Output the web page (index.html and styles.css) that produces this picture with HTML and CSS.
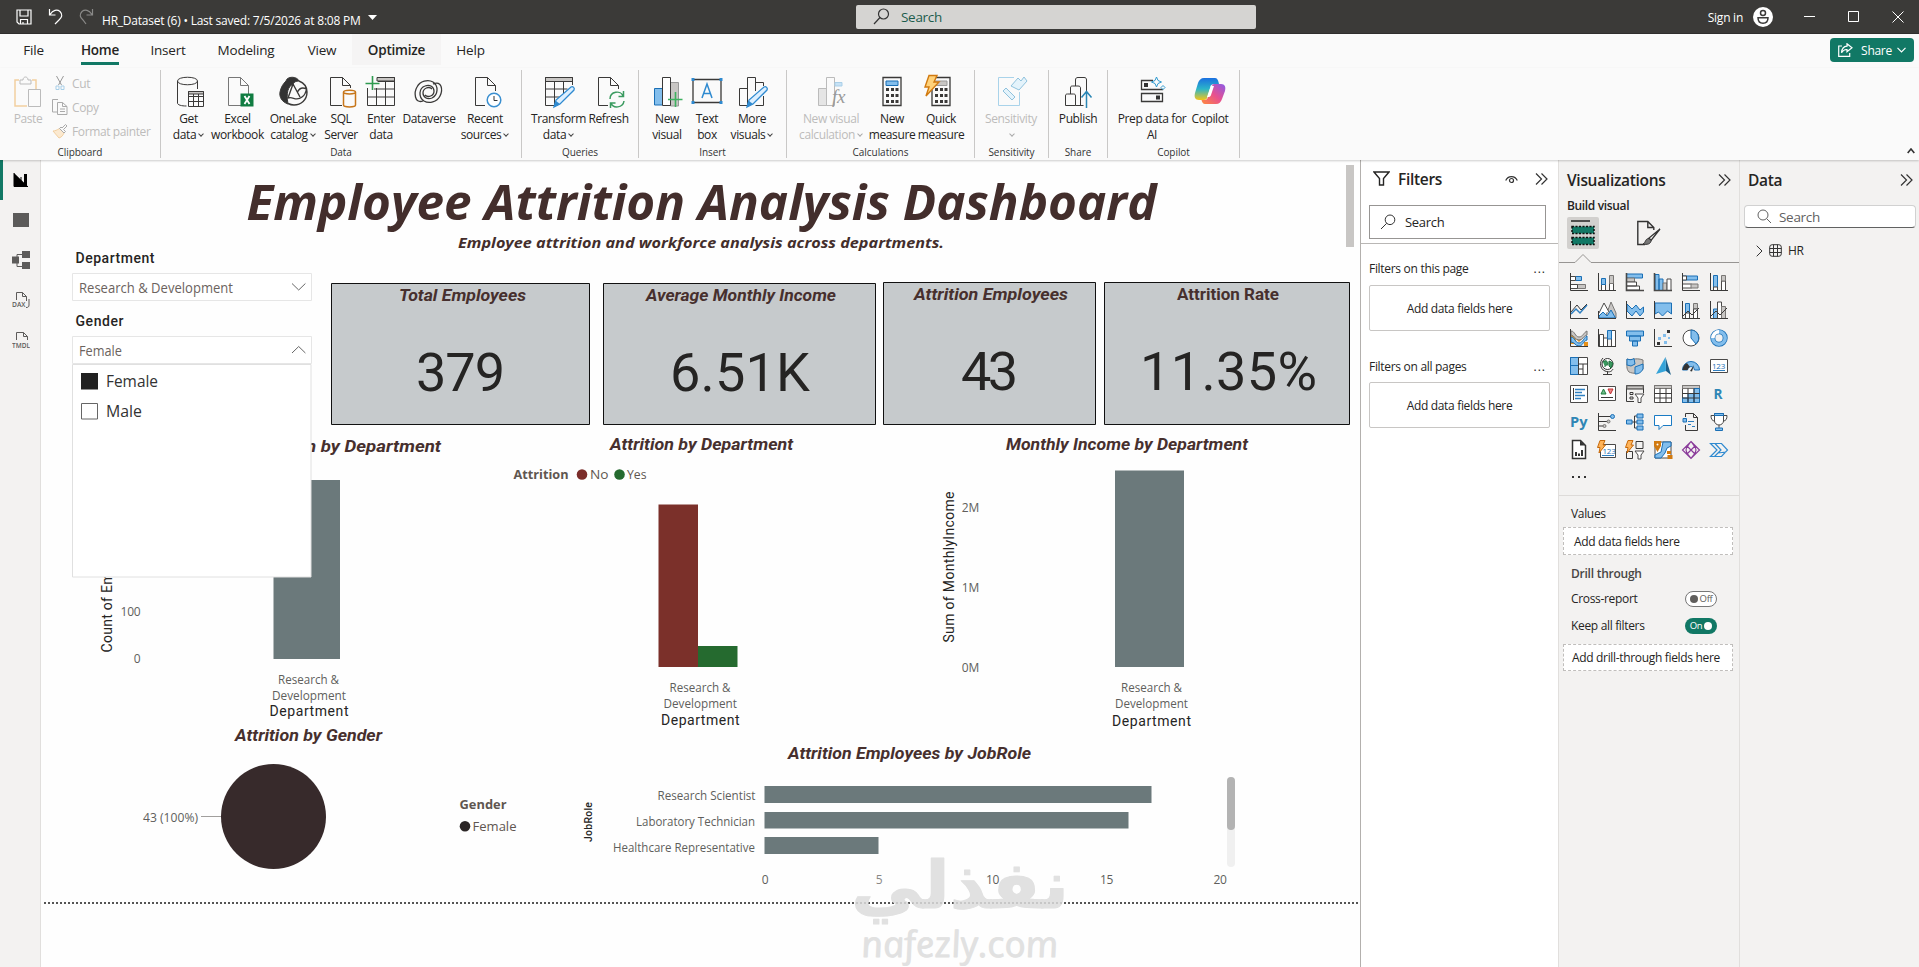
FILE: index.html
```html
<!DOCTYPE html>
<html lang="en">
<head>
<meta charset="utf-8">
<title>HR_Dataset (6)</title>
<link rel="stylesheet" href="styles.css">
</head>
<body>
<div class="app">
  <header class="titlebar">
    <div class="quick">
      <svg class="ic-save" width="16" height="16" viewBox="0 0 16 16"><path d="M1 1h14v14H3l-2-2zM4 1v6h8V1M4.500 15v-4.500h7V15M7 15v-2"/></svg>
      <svg class="ic-undo" width="16" height="17" viewBox="0 0 16 17"><path d="M1.500 1v6h6M2 6.500C5 2 9 1 12 3.500c3 3 2 6-1 8.500l-4 4"/></svg>
      <svg class="ic-redo" width="16" height="17" viewBox="0 0 16 17"><path d="M14.500 1v6h-6M14 6.500C11 2 7 1 4 3.500c-3 3-2 6 1 8.500l3 4"/></svg>
      <span class="doc">HR_Dataset (6) • Last saved: 7/5/2026 at 8:08 PM</span>
      <svg class="ic-drop" width="9" height="5" viewBox="0 0 9 5"><path d="M0 0h9L4.500 5z"/></svg>
    </div>
    <div class="topsearch">
      <svg width="17" height="17" viewBox="0 0 17 17"><circle cx="10.500" cy="6" r="5"/><path d="M7 9.500L1 16"/></svg>
      <span>Search</span>
    </div>
    <div class="account">
      <span>Sign in</span>
      <svg class="avatar" width="20" height="20" viewBox="0 0 20 20"><circle cx="10" cy="10" r="10" fill="#fff"/><circle cx="10" cy="6" r="2.500" fill="none" stroke="#3b3a39" stroke-width="1.500"/><path d="M5 10.700h10c0 4-2 5.500-5 5.500s-5-1.500-5-5.500z" fill="none" stroke="#3b3a39" stroke-width="1.500"/></svg>
      <svg class="win" width="11" height="11" viewBox="0 0 11 11"><path d="M0 5.500h11"/></svg>
      <svg class="win" width="11" height="11" viewBox="0 0 11 11"><path d="M.5 .5h10v10H.5z"/></svg>
      <svg class="win last" width="12" height="12" viewBox="0 0 12 12"><path d="M.5 .5l11 11M11.500 .5l-11 11"/></svg>
    </div>
  </header>

  <nav class="tabs">
    <span class="tab t-file">File</span><span class="tab t-home active">Home</span><span class="tab t-insert">Insert</span><span class="tab t-model">Modeling</span><span class="tab t-view">View</span><span class="tab t-opt">Optimize</span><span class="tab t-help">Help</span>
    <button class="share"><svg width="15" height="14" viewBox="0 0 15 14"><path d="M4 3H.7v10.300h11V10M9 .8l5 4-5 4V6.500C6.500 6.300 4.800 7.500 3.500 9.700 3.800 6 5.500 3.500 9 3.200z"/></svg><span>Share</span><svg width="9" height="6" viewBox="0 0 9 6"><path d="M.5 .8l4 4 4-4"/></svg></button>
  </nav>

  <section class="ribbon">
    <div class="group g-clip">
      <div class="items">
        <div class="btn dis w-paste"><svg width="28" height="32" viewBox="0 0 28 32"><path d="M5 4H1v26h12M18 4h4v10" stroke="#f2cfa0" stroke-width="1.500"/><path d="M6 8V4h3c0-4 5-4 5 0h3v4z" stroke="#bbb"/><path d="M14.500 13.500h12v17h-12z" stroke="#bbb"/></svg><span>Paste</span></div>
        <div class="clips">
          <div class="clip"><svg width="16" height="16" viewBox="0 0 16 16"><path d="M4.500 1l5 9M11.500 1l-5 9" stroke="#999"/><path d="M4 11h3v3.500H4zM9 11h3v3.500H9z" stroke="#a9cfe8"/></svg><span>Cut</span></div>
          <div class="clip"><svg width="16" height="16" viewBox="0 0 16 16"><path d="M5 13H.5V.5H6M5.500 3.500h5l4.500 4v8H5.500zM10.500 3.500v4H15M8 10h5M8 12.500h5" stroke="#aaa"/></svg><span>Copy</span></div>
          <div class="clip"><svg width="16" height="16" viewBox="0 0 16 16"><path d="M1 8l6 7c3-1 4-3 5-5L7.500 5.500C5 7 3 8 1 8z" stroke="#f2cfa0" fill="#fbe9d0"/><path d="M7.500 5.500l4.500 4.500 1.500-1.500-2-2L15 3l-1.500-1.500L10 5 9 4z" stroke="#aaa"/></svg><span>Format painter</span></div>
        </div>
      </div>
      <div class="cap">Clipboard</div>
    </div>
    <div class="group g-data">
      <div class="items">
        <div class="btn w49"><svg width="32" height="32" viewBox="0 0 32 32"><path d="M4.500 5v22c0 2 4 3 9 3M24.500 5v8M4.500 5c0-5 20-5 20 0s-20 5-20 0z"/><path d="M15.500 15.500h15v15h-15zM15.500 20.500h15M15.500 25.500h15M20.500 18v12.500M25.500 18v12.500"/><path d="M15.500 15.500h15v2.500h-15z" fill="#c8c6c4"/></svg><span>Get<br>data<i></i></span></div>
        <div class="btn w49"><svg width="32" height="32" viewBox="0 0 32 32"><path d="M19 29.500H6.500v-28h12l8 8V18M18.500 1.500v8h8" stroke="#777"/><path d="M18.500 17.500h13v13h-13z" fill="#107c41" stroke="none"/><path d="M22.500 20l5 8M27.500 20l-5 8" stroke="#fff" stroke-width="1.800"/></svg><span>Excel<br>workbook</span></div>
        <div class="btn w62"><svg width="32" height="32" viewBox="0 0 32 32"><path d="M9 5c1-5 11-5 13 0-3 0-5 1-6 3-5 3-7 8-5 20-6-2-9-7-8-12C4 11 6 8 9 5z" fill="#333"/><path d="M22 5c5 2 8 6 8 11 0 8-6 13-13 13-2 0-4-.5-6-1.500M16 8l7 13M11 22c5-2 8 4 14-1 3-2 4-5 4.500-8-4-2-7-1-9 3M11 22l5-14" stroke-width="1.400"/></svg><span>OneLake<br>catalog<i></i></span></div>
        <div class="btn w34"><svg width="32" height="32" viewBox="0 0 32 32"><path d="M17 29.500H5.500v-28h12l8 8V12M17.500 1.500v8h8"/><path d="M18.500 16v13c0 2.500 12 2.500 12 0V16c0-2.500-12-2.500-12 0s12 2.500 12 0" stroke="#c7761a" stroke-width="1.500"/></svg><span>SQL<br>Server</span></div>
        <div class="btn w46"><svg width="32" height="32" viewBox="0 0 32 32"><path d="M12 1.500h17.500V5H12z" fill="#c8c6c4"/><path d="M2.500 12v17.500h27v-28H12M2.500 21h27M13 5.500h16.500M9 13h20.500M11.500 12v17.500M20.500 5v24.500"/><path d="M7.500 0v14M.5 7.500h14" stroke="#2e9a4f" stroke-width="1.600"/></svg><span>Enter<br>data</span></div>
        <div class="btn w50"><svg width="32" height="32" viewBox="0 0 32 32"><path d="M10 25C1 28 1 16 4 11c3-6 11-8 16-5 6 4 5 13-1 16-5 2-9-1-9-5 0-5 6-7 9-4M20 8c9-4 10 6 7 12-3 6-11 8-16 5-6-4-5-13 1-15 5-2 9 1 9 5 0 5-6 7-9 4" stroke-width="1.300"/></svg><span>Dataverse</span></div>
        <div class="btn w62"><svg width="32" height="32" viewBox="0 0 32 32"><path d="M16 29.500H6.500v-28h12l8 8V15M18.500 1.500v8h8"/><circle cx="25" cy="24" r="6.800" stroke="#3a8fd0" stroke-width="1.500" fill="#fff"/><path d="M25 20v4.500h3.500" stroke="#333"/></svg><span>Recent<br>sources<i></i></span></div>
      </div>
      <div class="cap">Data</div>
    </div>
    <div class="group g-quer">
      <div class="items">
        <div class="btn w53"><svg width="32" height="32" viewBox="0 0 32 32"><path d="M2.500 1.500h27v4h-27z" fill="#c8c6c4"/><path d="M14 29.500H2.500v-28h27V9M2.500 13h22M2.500 21h15M11.500 5v24.500M20.500 5v12"/><path d="M11 31l2-7 15-13c2-1 4 1 3 3L17 28z" stroke="#2f8ad0" fill="#dcefff" stroke-width="1.300"/><path d="M11 31l2-6 4 3z" fill="#2f8ad0" stroke="none"/></svg><span>Transform<br>data<i></i></span></div>
        <div class="btn w47"><svg width="32" height="32" viewBox="0 0 32 32"><path d="M15 29.500H5.500v-28h12l8 8V13M17.500 1.500v8h8"/><path d="M17 23c0-8 11-9 13-3M30.500 15v5.500h-5M31 25c-1 7-11 8-13 2M17.500 32v-5h5" stroke="#3a9a5f" stroke-width="1.500"/></svg><span>Refresh</span></div>
      </div>
      <div class="cap">Queries</div>
    </div>
    <div class="group g-ins">
      <div class="items">
        <div class="btn w44"><svg width="32" height="32" viewBox="0 0 32 32"><path d="M19.500 6.500h8V30h-8z" fill="#c8c6c4" stroke="#999"/><path d="M3.500 12.500h8V29h-8z" fill="#83beec" stroke="#1a6fb5"/><path d="M11.500 1.500h8v28h-8z" fill="#fff"/><path d="M24.500 16v15M17 23.500h14.500" stroke="#3db15f" stroke-width="1.600"/></svg><span>New<br>visual</span></div>
        <div class="btn w36"><svg width="32" height="32" viewBox="0 0 32 32"><path d="M2 3.500h28v23H2z" stroke-width="1.300"/><path d="M.5 2h3v3h-3zM28.500 2h3v3h-3zM.5 25h3v3h-3zM28.500 25h3v3h-3z" fill="#2f8ad0" stroke="none"/><path d="M11 22l5-14 5 14M12.700 17.500h6.600" stroke="#2f8ad0" stroke-width="1.500"/></svg><span>Text<br>box</span></div>
        <div class="btn w54"><svg width="32" height="32" viewBox="0 0 32 32"><path d="M3.500 12.500h8v17h-8zM11.500 29.500v-28h8V15M19.500 6.500h8V10M19.500 29.500h8V20"/><path d="M11 31l2-7 15-13c2-1 4 1 3 3L17 28z" stroke="#2f8ad0" fill="#dcefff" stroke-width="1.300"/><path d="M11 31l2-6 4 3z" fill="#2f8ad0" stroke="none"/></svg><span>More<br>visuals<i></i></span></div>
      </div>
      <div class="cap">Insert</div>
    </div>
    <div class="group g-calc">
      <div class="items">
        <div class="btn dis w70"><svg width="32" height="32" viewBox="0 0 32 32"><path d="M3.500 12.500h8v17h-8z" fill="#e5e5e5" stroke="#bbb"/><path d="M11.500 1.500h8v28h-8z" stroke="#bbb"/><path d="M20 6.500h7V10h-7z" fill="#c7e2f5" stroke="#a9cfe8"/><text x="17" y="27" class="fx">fx</text></svg><span>New visual<br>calculation<i></i></span></div>
        <div class="btn w52"><svg width="32" height="32" viewBox="0 0 32 32"><path d="M7 1.500h18v28H7z" stroke-width="1.300"/><path d="M10 5h12v4.500H10z" fill="#83beec" stroke="#1a6fb5"/><path d="M11.500 12v16M16.500 12v16M21 12v16" stroke-width="3" stroke-dasharray="3 3"/></svg><span>New<br>measure</span></div>
        <div class="btn w46"><svg width="32" height="32" viewBox="0 0 32 32"><path d="M7 1.500h18v28H7z" stroke-width="1.300"/><path d="M10 5h12v4.500H10z" fill="#c8c6c4" stroke="#999"/><path d="M11.500 12v16M16.500 12v16M21 12v16" stroke-width="3" stroke-dasharray="3 3"/><path d="M4 -.5h8L9 6h5L1 20l3-9H0z" fill="#ffd27a" stroke="#d17a10" stroke-width="1.400"/></svg><span>Quick<br>measure</span></div>
      </div>
      <div class="cap">Calculations</div>
    </div>
    <div class="group g-sens">
      <div class="items">
        <div class="btn dis w52"><svg width="32" height="32" viewBox="0 0 32 32"><path d="M19 1.500H3.500v28h21V16" stroke="#a9d3ea"/><path d="M8 15l3-3 9 9-3 3zM16 10l7-8 3 3 3-4 3 4-8 9z" stroke="#8fc2dd" fill="#e4f3fb"/></svg><span>Sensitivity<br><i></i></span></div>
      </div>
      <div class="cap">Sensitivity</div>
    </div>
    <div class="group g-share">
      <div class="items">
        <div class="btn w52"><svg width="32" height="32" viewBox="0 0 32 32"><path d="M13.500 10V4c0-2 1-2.500 2.500-2.500h6c2 0 2.500 1 2.500 2.500v12M8.500 18v-6c0-1.500.5-2 2-2H16c2 0 2.500 1 2.500 2v17M3.500 29.500V20c0-1.500.5-2 2-2h6c1.500 0 2 .5 2 2v9.500zM13.500 29.500h8"/><path d="M24.500 32V16M19.500 21.500l5-6 5 6" stroke="#2a86b5" stroke-width="1.500"/></svg><span>Publish</span></div>
      </div>
      <div class="cap">Share</div>
    </div>
    <div class="group g-cop">
      <div class="items">
        <div class="btn w72"><svg width="32" height="32" viewBox="0 0 32 32"><path d="M17 4.500H5.500v9h21V13M5.500 17.500h21v8h-21z" stroke-width="1.300"/><path d="M8 7h4v4H8zM20 19.500h4v4h-4z" fill="#333" stroke="none"/><path d="M20.500 1l1.500 3.500L25.500 6 22 7.500 20.500 11 19 7.500 15.500 6 19 4.500zM27 9.500l2 2-2 2-2-2z" stroke="#2f9ad0" fill="#fafafa"/></svg><span>Prep data for<br>AI</span></div>
        <div class="btn w44"><svg width="32" height="32" viewBox="0 0 32 32">
          <defs><linearGradient id="ca" x1="0" y1="0" x2="0" y2="1"><stop offset="0" stop-color="#1b6fe0"/><stop offset=".5" stop-color="#2cb6c8"/><stop offset="1" stop-color="#f5c518"/></linearGradient><linearGradient id="cb" x1="1" y1="0" x2="0" y2="1"><stop offset="0" stop-color="#8a5be8"/><stop offset=".5" stop-color="#e8508f"/><stop offset="1" stop-color="#ff8a3c"/></linearGradient></defs>
          <path d="M10 2h11c2 0 3 2 3.500 4l.5 2h-5c-2 0-3 1-3.500 3l-3 10c-.5 2-1.500 3-3.500 3H5c-4 0-5-3-4-7L4 7c1-3 3-5 6-5z" fill="url(#ca)" stroke="none"/><path d="M22 28H11c-2 0-3-2-3.500-4h3c2 0 3-1 3.500-3l3-10c.5-2 1.500-3 3.500-3H27c4 0 5 3 4 7l-3 8c-1 3-3 5-6 5z" fill="url(#cb)" stroke="none"/><path d="M17 9l-4 12h1.500c1 0 2-.5 2.500-2l3-9h-1z" fill="#fff" stroke="none"/></svg><span>Copilot</span></div>
      </div>
      <div class="cap">Copilot</div>
    </div>
    <svg class="collapse" width="8" height="6" viewBox="0 0 8 6"><path d="M.7 5l3.300-4 3.300 4"/></svg>
  </section>

  <main class="work">
    <aside class="rail">
      <div class="railbtn on"><svg width="16" height="16" viewBox="0 0 16 16"><path d="M1 1v13h13V2h-3v10L1 2z" fill="#000"/><path d="M1 1v13.500h14M8 5v8" stroke="#000"/></svg></div>
      <div class="railbtn"><svg width="16" height="16" viewBox="0 0 16 16"><path d="M0 1h16v14H0z" fill="#5c5b5a"/></svg></div>
      <div class="railbtn"><svg width="18" height="18" viewBox="0 0 18 18"><path d="M10 0h8v7h-8zM10 11h8v7h-8zM0 5.500h7v7H0z" fill="#5c5b5a"/><path d="M5 6V3.500h6M5 12v3.500h6" stroke="#5c5b5a" fill="none"/></svg></div>
      <div class="railbtn"><svg width="18" height="18" viewBox="0 0 18 18"><path d="M4.500 9V1.500h6l4 4V10M10.500 1.500v4h4M17 8v6c0 2-1 2.500-3 2.500" stroke="#5c5b5a" fill="none"/><text x="0" y="16" class="railtxt" textLength="13.500" lengthAdjust="spacingAndGlyphs">DAX</text></svg></div>
      <div class="railbtn"><svg width="18" height="18" viewBox="0 0 18 18"><path d="M4.500 9V1.500h7l4 4V9M11.500 1.500v4h4" stroke="#5c5b5a" fill="none"/><text x="0" y="16.500" class="railtxt" textLength="18" lengthAdjust="spacingAndGlyphs">TMDL</text></svg></div>
    </aside>

    <section class="canvas">
      <svg class="report" width="1319" height="807" viewBox="41 160 1319 807">
        <text class="h1" x="246.500" y="219.500" textLength="910" lengthAdjust="spacingAndGlyphs">Employee Attrition Analysis Dashboard</text>
        <text class="h2" x="458" y="248" textLength="486" lengthAdjust="spacingAndGlyphs">Employee attrition and workforce analysis across departments.</text>

        <g class="card">
          <path d="M331.500 283.500h258v141h-258zM603.500 283.500h272v141h-272zM883.500 282.500h212v142h-212zM1104.500 282.500h245v142h-245z"/>
          <text class="ct it" x="399" y="301" textLength="127" lengthAdjust="spacingAndGlyphs">Total Employees</text>
          <text class="ct it" x="646" y="301" textLength="190" lengthAdjust="spacingAndGlyphs">Average Monthly Income</text>
          <text class="ct it" x="914" y="300" textLength="154" lengthAdjust="spacingAndGlyphs">Attrition Employees</text>
          <text class="ct" x="1177" y="300" textLength="102" lengthAdjust="spacingAndGlyphs">Attrition Rate</text>
          <text class="cv" x="416" y="390.500" textLength="89">379</text>
          <text class="cv" x="670" y="390.500" textLength="140">6.51K</text>
          <text class="cv" x="961" y="389.500" textLength="57">43</text>
          <text class="cv" x="1140" y="389.500" textLength="177">11.35%</text>
        </g>

        <g class="chart">
          <text class="ct it" x="306" y="452" textLength="135" lengthAdjust="spacingAndGlyphs">n by Department</text>
          <path class="bar" d="M273.500 480H340v179h-66.500z"/>
          <text class="ax" transform="translate(112 652.500) rotate(-90)" textLength="80">Count of Em</text>
          <text class="tk end" x="140.500" y="616">100</text>
          <text class="tk end" x="140.500" y="663">0</text>
          <text class="tk" x="278" y="684" textLength="61" lengthAdjust="spacingAndGlyphs">Research &amp;</text>
          <text class="tk" x="272" y="700" textLength="74" lengthAdjust="spacingAndGlyphs">Development</text>
          <text class="ax" x="269.500" y="716" textLength="79">Department</text>
        </g>

        <g class="chart">
          <text class="ct it" x="610" y="450" textLength="183" lengthAdjust="spacingAndGlyphs">Attrition by Department</text>
          <text class="lg b" x="513.500" y="479" textLength="55" lengthAdjust="spacingAndGlyphs">Attrition</text>
          <circle cx="582" cy="474.500" r="5.300" fill="#7b2d2a"/><text class="lg" x="590" y="479" textLength="18.500" lengthAdjust="spacingAndGlyphs">No</text>
          <circle cx="619.500" cy="474.500" r="5.300" fill="#256a2f"/><text class="lg" x="627" y="479" textLength="19.500" lengthAdjust="spacingAndGlyphs">Yes</text>
          <path d="M658.500 504.500H698V667h-39.500z" fill="#7b302a"/>
          <path d="M698 646h39.500v21H698z" fill="#256a2f"/>
          <text class="tk" x="669.500" y="692" textLength="61" lengthAdjust="spacingAndGlyphs">Research &amp;</text>
          <text class="tk" x="663.500" y="708" textLength="73.500" lengthAdjust="spacingAndGlyphs">Development</text>
          <text class="ax" x="661" y="724.500" textLength="78.500">Department</text>
        </g>

        <g class="chart">
          <text class="ct it" x="1006" y="450" textLength="242" lengthAdjust="spacingAndGlyphs">Monthly Income by Department</text>
          <text class="ax" transform="translate(953.500 642.500) rotate(-90)" textLength="151">Sum of MonthlyIncome</text>
          <text class="tk end" x="979" y="512">2M</text>
          <text class="tk end" x="979" y="592">1M</text>
          <text class="tk end" x="979" y="672">0M</text>
          <path class="bar" d="M1115 470.500h69V667h-69z"/>
          <text class="tk" x="1121" y="692" textLength="61" lengthAdjust="spacingAndGlyphs">Research &amp;</text>
          <text class="tk" x="1115" y="708" textLength="73" lengthAdjust="spacingAndGlyphs">Development</text>
          <text class="ax" x="1112" y="725.500" textLength="79">Department</text>
        </g>

        <g class="chart">
          <text class="ct it" x="235" y="741" textLength="147" lengthAdjust="spacingAndGlyphs">Attrition by Gender</text>
          <circle cx="273.500" cy="816.500" r="52.500" fill="#372a2b"/>
          <path d="M201 816.500h20" stroke="#a19f9d"/>
          <text class="tk" x="143" y="822" textLength="55" lengthAdjust="spacingAndGlyphs">43 (100%)</text>
          <text class="lg b" x="459.500" y="809" textLength="47" lengthAdjust="spacingAndGlyphs">Gender</text>
          <circle cx="465" cy="826.300" r="5.300" fill="#2b2626"/>
          <text class="lg" x="472.500" y="831" textLength="44" lengthAdjust="spacingAndGlyphs">Female</text>
        </g>

        <g class="chart">
          <text class="ct it" x="788" y="759" textLength="243" lengthAdjust="spacingAndGlyphs">Attrition Employees by JobRole</text>
          <text class="ax sm" transform="translate(592 842) rotate(-90)" textLength="40">JobRole</text>
          <text class="tk" x="657.500" y="800" textLength="98" lengthAdjust="spacingAndGlyphs">Research Scientist</text>
          <text class="tk" x="636" y="826" textLength="119" lengthAdjust="spacingAndGlyphs">Laboratory Technician</text>
          <text class="tk" x="613" y="852" textLength="142" lengthAdjust="spacingAndGlyphs">Healthcare Representative</text>
          <path class="bar" d="M764.500 786h387v17h-387zM764.500 812h364v16.500h-364zM764.500 837h114v17h-114z"/>
          <g class="mid"><text class="tk" x="765" y="884">0</text><text class="tk faint" x="879" y="884">5</text><text class="tk" x="992.500" y="884">10</text><text class="tk" x="1106.500" y="884">15</text><text class="tk" x="1220" y="884">20</text></g>
          <rect x="1227" y="777" width="8" height="90" rx="4" fill="#f0f0f0"/>
          <rect x="1227" y="777" width="8" height="53" rx="4" fill="#b3b3b3"/>
        </g>

        <g class="slicer">
          <text class="sl" x="75.500" y="263" textLength="79">Department</text>
          <path d="M72.500 273.500h239v27h-239z"/>
          <text class="sv" x="79" y="293" textLength="154" lengthAdjust="spacingAndGlyphs">Research &amp; Development</text>
          <path class="chev" d="M292 283.500l6.700 6.500 6.700-6.500"/>
          <text class="sl" x="75.500" y="326" textLength="48">Gender</text>
          <path d="M72.500 336.500h239v27h-239z"/>
          <text class="sv" x="79" y="356" textLength="43" lengthAdjust="spacingAndGlyphs">Female</text>
          <path class="chev" d="M292 353l6.700-6.500 6.700 6.500"/>
          <path class="pop" d="M72.500 364.500h238.500v212.500h-238.500z"/>
          <path d="M81 373h17v16.500H81z" class="checked"/>
          <text class="so" x="106" y="387" textLength="52" lengthAdjust="spacingAndGlyphs">Female</text>
          <path d="M81.500 403.500h16v15.500h-16z" class="box"/>
          <text class="so" x="106" y="417" textLength="36" lengthAdjust="spacingAndGlyphs">Male</text>
        </g>

        <path d="M44 903h1316" stroke="#555" stroke-width="2" stroke-dasharray="2 2"/>

        <g class="wm">
          <text class="wm-ar" transform="translate(960 908) scale(1.080 1)" text-anchor="middle">نفذلي</text>
          <text class="wm-en" transform="translate(863 957) skewX(10)" textLength="197" lengthAdjust="spacingAndGlyphs">nafezly.com</text>
        </g>
        <rect x="1346" y="165" width="8" height="82" fill="#c8c6c4"/>
      </svg>
    </section>

    <aside class="filters">
      <div class="fhead">
        <svg width="17" height="16" viewBox="0 0 17 16"><path d="M1 1h15l-5.500 6.500V14h-4V7.500z" fill="none" stroke="#252423" stroke-width="1.400"/></svg>
        <h2>Filters</h2>
        <svg class="eye" width="13" height="9" viewBox="0 0 13 9"><path d="M.7 5.500C3 .2 10 .2 12.300 5.500" fill="none" stroke="#333" stroke-width="1.200"/><circle cx="6.500" cy="5.500" r="2" fill="none" stroke="#333" stroke-width="1.200"/></svg>
        <svg class="dbl" width="13" height="12" viewBox="0 0 13 12"><path d="M1 .5L6.500 6 1 11.500M6.500 .5L12 6l-5.500 5.500"/></svg>
      </div>
      <div class="fsearch"><svg width="16" height="16" viewBox="0 0 16 16"><circle cx="10" cy="5.800" r="4.800"/><path d="M6.700 9.300L1 15"/></svg><span>Search</span></div>
      <div class="fsec"><span>Filters on this page</span><b>...</b></div>
      <div class="fbox">Add data fields here</div>
      <div class="fsec second"><span>Filters on all pages</span><b>...</b></div>
      <div class="fbox">Add data fields here</div>
    </aside>

    <aside class="viz">
      <div class="vhead"><h2>Visualizations</h2><svg class="dbl" width="13" height="12" viewBox="0 0 13 12"><path d="M1 .5L6.500 6 1 11.500M6.500 .5L12 6l-5.500 5.500"/></svg></div>
      <h3>Build visual</h3>
      <div class="modes">
        <div class="mode on"><svg width="24" height="26" viewBox="0 0 24 26"><path d="M0 1h19" stroke="#252423" stroke-width="1.500"/><path d="M1 6.500h22v7H1zM1 17.500h22v7H1z" fill="#117865" stroke="#111" stroke-width="1.500" stroke-dasharray="2 1.500"/></svg></div>
        <div class="mode"><svg width="24" height="26" viewBox="0 0 24 26"><path d="M8 24.500H.8V1.500h10l6 6V10M10.800 1.500v6h6" fill="none" stroke="#333" stroke-width="1.400"/><path d="M23 9L12 18l2 2.500z" fill="none" stroke="#333" stroke-width="1.300"/><path d="M12 18.500c-4 0-3 4-6 5.500 4 1 8 0 8-3.500z" fill="#777" stroke="#333"/></svg></div>
      </div>
      <svg class="notch" width="180" height="9" viewBox="0 0 180 9"><path d="M0 8.500h16l8-8 8 8h148"/></svg>
      <div class="vgrid">
        <svg viewBox="0 0 18 18"><path class="b" d="M5.500 3.500h6v4h-6z"/><path class="g" d="M6.500 11.500h9v4h-9z"/><path class="w" d="M.5 3.500h5v4h-5zM.5 11.500h7v4h-7z"/><path class="k" d="M.5 0v17.500H18"/></svg>
        <svg viewBox="0 0 18 18"><path class="w" d="M3.500 11.500h4v6h-4zM11.500 9.500h4v8h-4z"/><path class="b" d="M3.500 5.500h4v6h-4z"/><path class="g" d="M11.500 2.500h4v8h-4z"/><path class="k" d="M.5 0v17.500H18"/></svg>
        <svg viewBox="0 0 18 18"><path class="b" d="M.5 1h16v4H.5z"/><path class="g" d="M.5 5h8v4h-8z"/><path class="w" d="M.5 9h10v4H.5zM.5 13h13v4H.5z"/><path class="k2" d="M.5 0v17.500H18"/></svg>
        <svg viewBox="0 0 18 18"><path class="b" d="M1 1.500h4v16H1zM5 6h4v11.500H5z"/><path class="g" d="M9 10h4v7.500H9z"/><path class="w" d="M13 6h4v11.500h-4z"/><path class="k2" d="M.5 0v17.500H18"/></svg>
        <svg viewBox="0 0 18 18"><path class="b" d="M.5 3h15v4H.5z"/><path class="w" d="M.5 3h4v4h-4zM.5 11h9v4h-9z"/><path class="g" d="M9 11h7v4H9z"/><path class="k" d="M.5 0v17.500H18"/></svg>
        <svg viewBox="0 0 18 18"><path class="b" d="M3.500 2.500h4v12h-4z"/><path class="w" d="M3.500 14h4v3.500h-4zM11.500 8h4v9.500h-4z"/><path class="g" d="M11.500 2.500h4V8h-4z"/><path class="k" d="M.5 0v17.500H18"/></svg>

        <svg viewBox="0 0 18 18"><path class="bl" d="M1 13l5-5 4 4 7-8" stroke-width="1.500"/><path class="k" d="M1 11l6-7 4 5 6-6M.5 0v17.500H18"/></svg>
        <svg viewBox="0 0 18 18"><path class="g" d="M7 17L13 1l5 11v5z"/><path class="w" d="M1 12l5-10 5 9"/><path class="b" d="M1 17v-2l4-4 4 4 4-6 4.500 8z"/><path class="k" d="M.5 10v7.500H18"/></svg>
        <svg viewBox="0 0 18 18"><path class="b" d="M1 3l5 5 4-4 4 5 3.500-3v5L14 15l-4-5-4 5-5-5z"/><path class="k" d="M.5 0v17.500H18"/></svg>
        <svg viewBox="0 0 18 18"><path class="b" d="M1 2h16.500v11l-4-3-5 5-4-4-3.500 2z"/><path class="k" d="M.5 0v17.500H18"/></svg>
        <svg viewBox="0 0 18 18"><path class="b" d="M3.500 2.500h4v10h-4z"/><path class="g" d="M11.500 2.500h4V8h-4z"/><path class="w" d="M3.500 12h4v5.500h-4zM11.500 8h4v9.500h-4z"/><path class="k" d="M1 15l5-5 4 4 7-7M.5 0v17.500H18"/></svg>
        <svg viewBox="0 0 18 18"><path class="b" d="M3.500 8h4v9.500h-4z"/><path class="w" d="M7.500 1h4v16.500h-4z"/><path class="g" d="M11.500 5.500h4v12h-4z"/><path class="k" d="M1 15l5-5 4 4 7-7M.5 0v17.500H18"/></svg>

        <svg viewBox="0 0 18 18"><path d="M1 6h2l3 4-2 5H1zM14 13h4v4h-4zM6 10h6l-3 3z" fill="#e8921a"/><path class="g" d="M1 2c4 0 4 6 8 6s5-5 8-6v4c-4 1-4 5-8 5s-5-5-8-5z"/><path class="b" d="M1 8c4 0 4 6 8 6s5-6 8-7v4c-4 1-4 6-8 6s-4-4-8-4z"/><path class="k" d="M.5 0v17.500H18"/></svg>
        <svg viewBox="0 0 18 18"><path class="w" d="M1.500 5.500h4v12h-4zM5.500 9h4v8.500h-4zM13.500 1.500h4v16h-4z"/><path class="b" d="M9.500 1.500h4V10h-4z"/><path class="k" d="M.5 0v17.500H18"/></svg>
        <svg viewBox="0 0 18 18"><path class="b" d="M.5 2h17v5H.5zM3.500 7h11v5h-11zM6.500 12h5v5h-5z"/></svg>
        <svg viewBox="0 0 18 18"><path d="M4 8h3v3H4zM9 5h3v3H9zM10 12h3v3h-3z" fill="#83beec"/><path d="M13 1h3v3h-3zM3 13h3v3H3z" fill="#333"/><path d="M14 8h2v2h-2z" fill="#83beec"/><path class="k" d="M.5 0v17.500H18"/></svg>
        <svg viewBox="0 0 18 18"><circle class="w" cx="9" cy="9" r="8"/><path class="b" d="M9 1a8 8 0 0 1 5 14L9 9z"/></svg>
        <svg viewBox="0 0 18 18"><circle cx="9" cy="9" r="6.200" fill="none" stroke="#1a6fb5" stroke-width="5"/><circle cx="9" cy="9" r="6.200" fill="none" stroke="#83beec" stroke-width="3.500"/><path d="M9 2.800A6.200 6.200 0 0 0 2.800 9" fill="none" stroke="#fff" stroke-width="3.500"/></svg>

        <svg viewBox="0 0 18 18"><path class="w" d="M.5 .5h17v17H.5z"/><path class="b" d="M.5 .5h8v8h-8zM.5 8.500h8v9h-8z"/><path class="k" d="M8.500 .5v17M8.500 7h9M13 7v10.500M8.500 12h4.500"/></svg>
        <svg viewBox="0 0 18 18"><circle cx="9.500" cy="7" r="5.500" fill="#fff" stroke="#333"/><path d="M5 5c3-3 5 0 5 2s-3 0-3 3M11 4l4 2-2 5-2-2z" fill="#3a9a5f" stroke="#1f6e3d"/><path class="k" d="M5 1C1 5 2 12 7 14s7 0 8-2M9.500 14.500v3M5 17.500h9"/></svg>
        <svg viewBox="0 0 18 18"><path class="g" d="M1 2c4 2 8-2 16 1v9c-3 5-10 5-14 3C0 12 1 8 1 2z"/><path class="b" d="M1 2c3 1 5 1 7-.5L9 7 5 9l-4-1zM9 10l8-3v5c-2 4-5 5-8 5z"/></svg>
        <svg viewBox="0 0 18 18"><path d="M11.500 0L17 18l-5-4z" fill="#1a5f8a"/><path d="M11.500 0L2 17l10-3z" fill="#35a3d8"/></svg>
        <svg viewBox="0 0 18 18"><path class="b" d="M.5 13a8.500 8.500 0 0 1 17 0h-5a3.500 3.500 0 0 0-7 0z"/><path d="M.5 13A8.500 8.500 0 0 1 5 6l3 4a4 4 0 0 0-2.500 3zM8 14l4-6-2 6.500z" fill="#333"/></svg>
        <svg viewBox="0 0 18 18"><path class="w" d="M.5 2.500h17v13H.5z"/><text x="2" y="11.500" class="n123">123</text><path class="bl" d="M3 13.500h12"/></svg>

        <svg viewBox="0 0 18 18"><path class="w" d="M.5 .5h17v17H.5z"/><path class="k" d="M3.500 3v12"/><path class="bl" d="M5 4.500h10M5 7.500h7M5 10.500h10M5 13.500h6" stroke-width="1.500"/></svg>
        <svg viewBox="0 0 18 18"><path class="w" d="M.5 1.500h17v14H.5z"/><path d="M3 9l2.500-5L8 9z" fill="#6fc08a" stroke="#1f7a3d"/><path d="M10 4h5l-2.500 5z" fill="#f08a8a" stroke="#c03030"/><path class="k" d="M3 12.500h12"/></svg>
        <svg viewBox="0 0 18 18"><path class="k" d="M8 16.500H.5V.5h17V8M.5 4h17M4 7.500h3v2H4zM4 12h3v2H4z"/><path class="g" d="M1 1h16v2.500H1z"/><path class="w" d="M9 9h9l-3 4v4.500h-3V13z"/></svg>
        <svg viewBox="0 0 18 18"><path class="w" d="M.5 .5h17v17H.5z"/><path class="g" d="M.5 .5h17v3H.5z"/><path class="k" d="M.5 8.500h17M.5 13h17M6 3.500v14M12 3.500v14"/></svg>
        <svg viewBox="0 0 18 18"><path class="w" d="M.5 .5h17v17H.5z"/><path class="g" d="M.5 .5h17v3H.5z"/><path class="b" d="M12 3.500h5.500v14H12zM6 8.500h6v9H6zM.5 13H6v4.500H.5z"/><path class="k" d="M.5 8.500h17M.5 13h17M6 3.500v14M12 3.500v14"/></svg>
        <svg viewBox="0 0 18 18"><text x="3.500" y="14" class="rpy" textLength="9" lengthAdjust="spacingAndGlyphs">R</text></svg>

        <svg viewBox="0 0 18 18"><text x="0" y="14" class="rpy" textLength="17.500" lengthAdjust="spacingAndGlyphs">Py</text></svg>
        <svg viewBox="0 0 18 18"><path class="k" d="M.5 0v17.500H18M1 3.500h12M1 8.500h9M1 13h5"/><circle class="b" cx="14.500" cy="3.500" r="2"/><circle class="g" cx="10.500" cy="8.500" r="1.500"/><circle class="g" cx="6.500" cy="13" r="1.500"/></svg>
        <svg viewBox="0 0 18 18"><path class="k" d="M6 9h5M8.500 3v12M8.500 3h3M8.500 15h3"/><path class="b" d="M.5 7h5.500v4H.5zM11 1h6v4h-6zM11 7h6v4h-6zM11 13h6v4h-6z"/></svg>
        <svg viewBox="0 0 18 18"><path d="M.5 2.500h17v10H9L5 16.500v-4H.5z" fill="#fff" stroke="#1a7bc4"/></svg>
        <svg viewBox="0 0 18 18"><path class="k" d="M3.500 4V.5h8l4 4v13h-12V12M11.500 .5v4h4"/><path d="M1 5.500h3.500V9H1z" class="b"/><path class="bl" d="M6 8.500h6M6 11.500h3M10 13.500h3"/></svg>
        <svg viewBox="0 0 18 18"><path class="w" d="M4.500 .5h9V8c0 2-2 4-4.500 4s-4.500-2-4.500-4zM4.500 2.500H1C1 6 2 8 5 8M13.500 2.500H17c0 3.500-1 5.500-4 5.500M9 12v3"/><path class="b" d="M5.500 15h7v2.500h-7zM4.500 .5h9v2h-9z"/></svg>

        <svg viewBox="0 0 18 18"><path d="M2.500 -.5h8l5 5v13h-13z" fill="#fff" stroke="#333" stroke-width="1.500"/><path d="M10-.5l5 5h-5z" fill="#333"/><path d="M6 15v-4M9 15v-2.500M12 15V9" stroke="#333" stroke-width="2"/></svg>
        <svg viewBox="0 0 18 18"><path class="w" d="M2.500 3.500h15v13h-15z"/><text x="4.500" y="12.500" class="n123">123</text><path class="bl" d="M4 14.500h12"/><path class="o" d="M2-.5h5L5 4h2.500L1 12l1-5.500H-.5z"/></svg>
        <svg viewBox="0 0 18 18"><path class="k" d="M10 .5h7v7h-7zM.5 10.500h6v7h-6z"/><path class="w" d="M9 10h9l-3 4v4h-3v-4z"/><path class="o" d="M2-.5h5L5 4h2.500L1 12l1-5.500H-.5z"/></svg>
        <svg viewBox="0 0 18 18"><path class="w" d="M1 1h16v16H1z"/><path class="b" d="M9 1h8v4l-4 2-2 5-4 5H1v-3l6-3 1-5z"/><path d="M0 0h7v5L3.500 11 0 5zM13 10h4v3h-4zM13.500 14h5v4h-5z" fill="#d17a10"/><circle cx="3.500" cy="3.500" r="1" fill="#fff"/></svg>
        <svg viewBox="0 0 18 18"><path d="M9 .5L17.500 9 9 17.500.5 9zM5 5l8 8M13 5l-8 8M9 .5c-2 3-5 5-5 8.500M9 .5c2 3 5 5 5 8.500M9 17.500c-2-3-5-5-5-8.500M9 17.500c2-3 5-5 5-8.500" fill="none" stroke="#8a3b9a" stroke-width="1.200"/></svg>
        <svg viewBox="0 0 18 18"><path d="M.5 2.500h11L17.500 9l-6 6.500H.5L7 9zM5 2.500L11 9l-6.500 6.500M8 12l8-1" fill="none" stroke="#2f8ad0" stroke-width="1.200"/></svg>
      </div>
      <div class="more"><i></i><i></i><i></i></div>
      <div class="wells">
        <div class="lab">Values</div>
        <div class="well v1">Add data fields here</div>
        <div class="lab strong">Drill through</div>
        <div class="lab row"><span>Cross-report</span><span class="tog off"><i></i>Off</span></div>
        <div class="lab row keep"><span>Keep all filters</span><span class="tog onn">On<i></i></span></div>
        <div class="well v2">Add drill-through fields here</div>
      </div>
    </aside>

    <aside class="data">
      <div class="vhead"><h2>Data</h2><svg class="dbl" width="13" height="12" viewBox="0 0 13 12"><path d="M1 .5L6.500 6 1 11.500M6.500 .5L12 6l-5.500 5.500"/></svg></div>
      <div class="dsearch"><svg width="15" height="15" viewBox="0 0 15 15"><circle cx="6" cy="6" r="5"/><path d="M9.700 9.700L14 14"/></svg><span>Search</span></div>
      <div class="drow"><svg width="7" height="12" viewBox="0 0 7 12"><path d="M.7 .7L6 6 .7 11.300"/></svg><svg width="13" height="13" viewBox="0 0 13 13"><rect x=".7" y=".7" width="11.600" height="11.600" rx="2.500"/><path d="M.7 4.500h11.600M.7 8.500h11.600M4.500 .7v11.600M8.500 .7v11.600"/></svg><span>HR</span></div>
    </aside>
  </main>
</div>
</body>
</html>
```
FILE: styles.css
```css
* { box-sizing: border-box; }
body { margin: 0; font-family: "Open Sans", "Noto Sans", sans-serif; color: #252423; overflow: hidden; }
h2, h3 { margin: 0; font-weight: 600; }
svg { display: block; flex: none; }
.app { width: 1919px; height: 967px; display: flex; flex-direction: column; background: #fff; }

/* Title bar */
.titlebar { height: 34px; background: #3b3a38; color: #fff; display: flex; align-items: center; font-size: 12px; border-bottom: 1px solid #2f2e2d; }
.quick { width: 856px; display: flex; align-items: center; padding-left: 16px; }
.quick path { fill: none; stroke: #fff; stroke-width: 1.2; }
.ic-undo { margin-left: 16px; }
.ic-redo { margin-left: 14px; opacity: .4; }
.doc { margin: 7px 0 0 8px; letter-spacing: -.22px; width: 262px; white-space: nowrap; }
.quick .ic-drop { margin-left: 4px; margin-top: 2px; }
.quick .ic-drop path { fill: #fff; stroke: none; }
.topsearch { width: 400px; height: 24px; background: #d5d4d2; border-radius: 2px; display: flex; align-items: center; padding-left: 17px; gap: 11px; color: #1c5c4c; font-size: 13.5px; letter-spacing: -.3px; }
.topsearch svg { fill: none; stroke: #333; stroke-width: 1.2; }
.account { flex: 1; display: flex; align-items: center; justify-content: flex-end; padding-right: 15px; }
.account span { letter-spacing: -.25px; padding-top: 1px; }
.avatar { margin: 0 31px 0 10px; }
.win { fill: none; stroke: #fff; margin-right: 33px; }
.win.last { margin-right: 0; }

/* Tabs */
.tabs { height: 34px; background: #fafafa; display: flex; align-items: flex-start; font-size: 13.5px; padding-left: 15px; }
.tab { height: 31px; line-height: 33px; text-align: center; letter-spacing: -.2px; display: flex; justify-content: center; }
.t-file { width: 37px; }
.t-home { width: 38px; margin-left: 29px; }
.t-insert { width: 34px; margin-left: 32px; }
.t-model { width: 58px; margin-left: 32px; }
.t-view { width: 30px; margin-left: 32px; }
.t-opt { width: 89px; margin-left: 15px; background: #f5f4f4; font-weight: 600; }
.t-help { width: 29px; margin-left: 15px; }
.active { font-weight: 600; border-bottom: 3px solid #117865; }
.share { margin: 4px 5px 0 auto; width: 84px; height: 24px; border: 0; border-radius: 4px; background: #117865; color: #fff; font: 12px "Open Sans", sans-serif; letter-spacing: -.3px; display: flex; align-items: center; justify-content: center; gap: 5px; padding: 0; }
.share span { margin-left: 3px; }
.share svg { fill: none; stroke: #fff; stroke-width: 1.2; }

/* Ribbon */
.ribbon { height: 92px; background: #fafafa; display: flex; padding-top: 2px; position: relative; font-size: 12px; box-shadow: 0 1px 2px rgba(0,0,0,.2); z-index: 2; }
.group { height: 88px; border-right: 1px solid #c9c8c7; display: flex; flex-direction: column; }
.items { display: flex; height: 77px; padding-top: 6px; }
.cap { text-align: center; font-size: 10px; line-height: 12px; letter-spacing: -.05px; color: #333; }
.g-clip { width: 161px; }
.g-data { width: 361px; }
.g-quer { width: 117px; }
.g-ins { width: 148px; }
.g-calc { width: 188px; }
.g-sens { width: 74px; }
.g-share { width: 59px; }
.g-cop { width: 132px; }
.g-clip .items { padding-left: 8px; }
.g-data .items { padding-left: 3px; }
.g-quer .items { padding-left: 10px; }
.g-ins .items { padding-left: 6px; }
.g-calc .items { padding-left: 9px; }
.g-sens .items { padding-left: 10px; }
.g-share .items { padding-left: 3px; }
.g-cop .items { padding-left: 8px; }
.btn { display: flex; flex-direction: column; align-items: center; line-height: 16px; text-align: center; white-space: nowrap; letter-spacing: -.38px; gap: 3px; }
.btn svg { fill: none; stroke: #3a3938; overflow: visible; }
.btn i { display: inline-block; width: 4px; height: 4px; border: solid #444; border-width: 0 1.2px 1.2px 0; transform: rotate(45deg); margin: 0 1px 3px 3px; }
.dis, .dis span { color: #bdbcbb; }
.dis i { border-color: #aaa; }
.fx { font: italic 19px "Liberation Serif", serif; fill: #999; stroke: none; }
.w34 { width: 34px; } .w36 { width: 36px; } .w44 { width: 44px; } .w46 { width: 46px; } .w47 { width: 47px; }
.w49 { width: 49px; } .w50 { width: 50px; } .w52 { width: 52px; } .w53 { width: 53px; } .w54 { width: 54px; }
.w62 { width: 62px; } .w70 { width: 70px; } .w72 { width: 72px; }
.w-paste { width: 40px; }
.clips { padding-left: 4px; margin-top: -5px; }
.clip { height: 24px; display: flex; align-items: center; gap: 4px; color: #bdbcbb; letter-spacing: -.38px; white-space: nowrap; }
.clip svg { fill: none; }
.collapse { position: absolute; right: 4px; bottom: 6px; fill: none; stroke: #333; stroke-width: 1.6; }

/* Work area */
.work { flex: 1; display: flex; min-height: 0; }
.rail { width: 41px; background: #f3f2f1; border-right: 1px solid #e1dfdd; }
.railbtn { height: 40px; display: flex; align-items: center; justify-content: center; padding-left: 0; border-left: 3px solid transparent; padding-right: 2px; }
.railbtn.on { border-left-color: #117865; }
.railtxt { font: 600 6.500px "Open Sans", sans-serif; fill: #5c5b5a; }
.canvas { width: 1319px; background: #fefefe; }

.report text { font-family: "Open Sans", sans-serif; }
.report .h1 { font-size: 49px; font-weight: 700; font-style: italic; fill: #432e2c; }
.report .h2 { font-size: 14.500px; font-weight: 700; font-style: italic; fill: #432e2c; }
.card path { fill: #c6cacc; stroke: #111; }
.report .ct { font-family: Roboto, sans-serif; font-size: 17px; font-weight: 700; fill: #47302e; }
.report .it { font-style: italic; }
.report .cv { font-family: Roboto, sans-serif; font-size: 54px; fill: #252423; }
.report .ax { font-family: Roboto, sans-serif; font-size: 14px; fill: #252423; }
.report .sm { font-size: 10.500px; font-weight: 500; }
.tk { font-size: 12px; fill: #605e5c; }
.faint { fill: #8a8886; }
.end { text-anchor: end; letter-spacing: -.2px; }
.mid { text-anchor: middle; letter-spacing: -.3px; }
.lg { font-size: 13px; fill: #605650; }
.b { font-weight: 700; }
.bar { fill: #6b797b; }
.slicer path { fill: #fff; stroke: #e6e6e6; }
.slicer .chev { fill: none; stroke: #666; }
.slicer .pop { stroke: #e0e0e0; }
.slicer .box { stroke: #666; }
.slicer .checked { fill: #212121; stroke: none; }
.report .sl { font-family: Roboto, sans-serif; font-size: 14px; font-weight: 500; fill: #252423; }
.sv { font-size: 14px; fill: #6b635e; }
.so { font-size: 16px; fill: #333; }
.wm { fill: #dcdcdc; opacity: .85; stroke: #dcdcdc; stroke-linejoin: round; }
.report .wm-ar { font-family: "DejaVu Sans", sans-serif; font-weight: 700; font-size: 66px; stroke-width: 1; }
.report .wm-en { font-size: 36px; font-style: italic; font-weight: 500; stroke-width: .8; }

/* Filters */
.filters { width: 198px; border-left: 1px solid #b3b0ad; background: #fff; font-size: 12px; }
.fhead { height: 45px; display: flex; align-items: center; padding: 0 10px 7px 12px; }
.fhead h2 { margin-left: 8px; }
h2 { font-size: 15.500px; letter-spacing: -.3px; }
.eye { margin-left: auto; }
.dbl { fill: none; stroke: #333; stroke-width: 1.2; }
.fhead .dbl { margin-left: 17px; }
.fsearch { margin: 0 0 4px 8px; width: 177px; height: 34px; border: 1px solid #979593; display: flex; align-items: center; padding-left: 10px; gap: 9px; font-size: 13px; letter-spacing: -.3px; }
.fsearch svg, .dsearch svg, .drow svg { fill: none; stroke: #333; }
.fsec { height: 42px; border-top: 1px solid #b9b7b5; display: flex; align-items: center; justify-content: space-between; padding: 8px 12px 0 8px; letter-spacing: -.3px; white-space: nowrap; }
.fsec b { font-weight: 400; letter-spacing: 1px; }
.fsec.second { border-top: 0; height: 51px; padding-top: 19px; }
.fbox { margin-left: 8px; width: 181px; height: 46px; border: 1px solid #c8c6c4; border-radius: 2px; display: flex; align-items: center; justify-content: center; letter-spacing: -.33px; padding-top: 1px; }

/* Visualizations */
.viz { width: 181px; background: #f3f2f1; border-left: 1px solid #e1dfdd; font-size: 12px; }
.vhead { height: 38px; display: flex; align-items: center; justify-content: space-between; padding: 2px 8px 0 8px; }
.vhead h2 { margin-top: -1px; }
.viz h3 { font-size: 12px; line-height: 16px; letter-spacing: -.35px; padding-left: 8px; }
.modes { display: flex; padding: 3px 0 0 8px; gap: 34px; height: 37px; }
.mode { width: 32px; height: 32px; display: flex; align-items: center; justify-content: center; }
.mode.on { background: #d2d0ce; border-radius: 2px; }
.notch { height: 9px; margin-top: 3px; fill: none; stroke: #979593; }
.vgrid { display: grid; grid-template-columns: repeat(6, 18px); gap: 10px; padding: 10px 0 0 11px; }
.vgrid svg { width: 18px; height: 18px; overflow: visible; }
.vgrid .k { fill: none; stroke: #3a3938; }
.vgrid .k2 { fill: none; stroke: #4a4948; stroke-width: 1.6; }
.vgrid .b { fill: #83beec; stroke: #1a6fb5; }
.vgrid .g { fill: #c8c6c4; stroke: #797775; }
.vgrid .w { fill: #fff; stroke: #4a4948; }
.vgrid .bl { fill: none; stroke: #2f7fc0; }
.vgrid .o { fill: #ffb45a; stroke: #c7690a; }
.n123 { font: 8px "Open Sans", sans-serif; fill: #1a6fb5; letter-spacing: -.2px; }
.rpy { font: 700 14px "Open Sans", sans-serif; fill: #2f86b5; }
.more { display: flex; gap: 4px; padding: 17px 0 0 13px; height: 37px; border-bottom: 1px solid #dddbd9; }
.more i { width: 2px; height: 2px; background: #333; }
.wells { padding-top: 9px; }
.lab { height: 18px; line-height: 18px; padding-left: 12px; letter-spacing: -.33px; }
.well { width: 170px; height: 28px; background: #fff; border: 1px dashed #c0bebc; display: flex; align-items: center; letter-spacing: -.33px; white-space: nowrap; }
.v1 { padding-left: 10px; margin: 4px 0 10px 4px; }
.v2 { padding-left: 8px; height: 27px; margin: 9px 0 0 4px; }
.strong { font-weight: 600; color: #484644; letter-spacing: -.25px; }
.row { display: flex; justify-content: space-between; align-items: center; padding-right: 22px; margin-top: 7px; }
.row.keep { margin-top: 9px; }
.tog { width: 32px; height: 16px; border-radius: 8px; font-size: 9.500px; line-height: 12px; display: flex; align-items: center; justify-content: center; gap: 2px; }
.tog i { width: 8px; height: 8px; border-radius: 50%; background: #605e5c; }
.off { border: 1px solid #777; background: #fff; color: #605e5c; }
.onn { background: #117865; color: #fff; }
.onn i { background: #fff; }

/* Data */
.data { flex: 1; background: #f3f2f1; border-left: 1px solid #e1dfdd; }
.data .vhead { padding: 2px 6px 0 8px; }
.dsearch { margin: 7px 0 0 4px; width: 172px; height: 23px; border: 1px solid #d1d1d1; border-bottom-color: #616161; border-radius: 4px; background: #fff; display: flex; align-items: center; padding-left: 12px; gap: 7px; font-size: 13.500px; letter-spacing: -.3px; color: #616161; }
.dsearch svg { stroke: #616161; }
.drow { display: flex; align-items: center; padding: 14px 0 0 16px; gap: 6px; font-size: 12px; letter-spacing: -.4px; }
```
